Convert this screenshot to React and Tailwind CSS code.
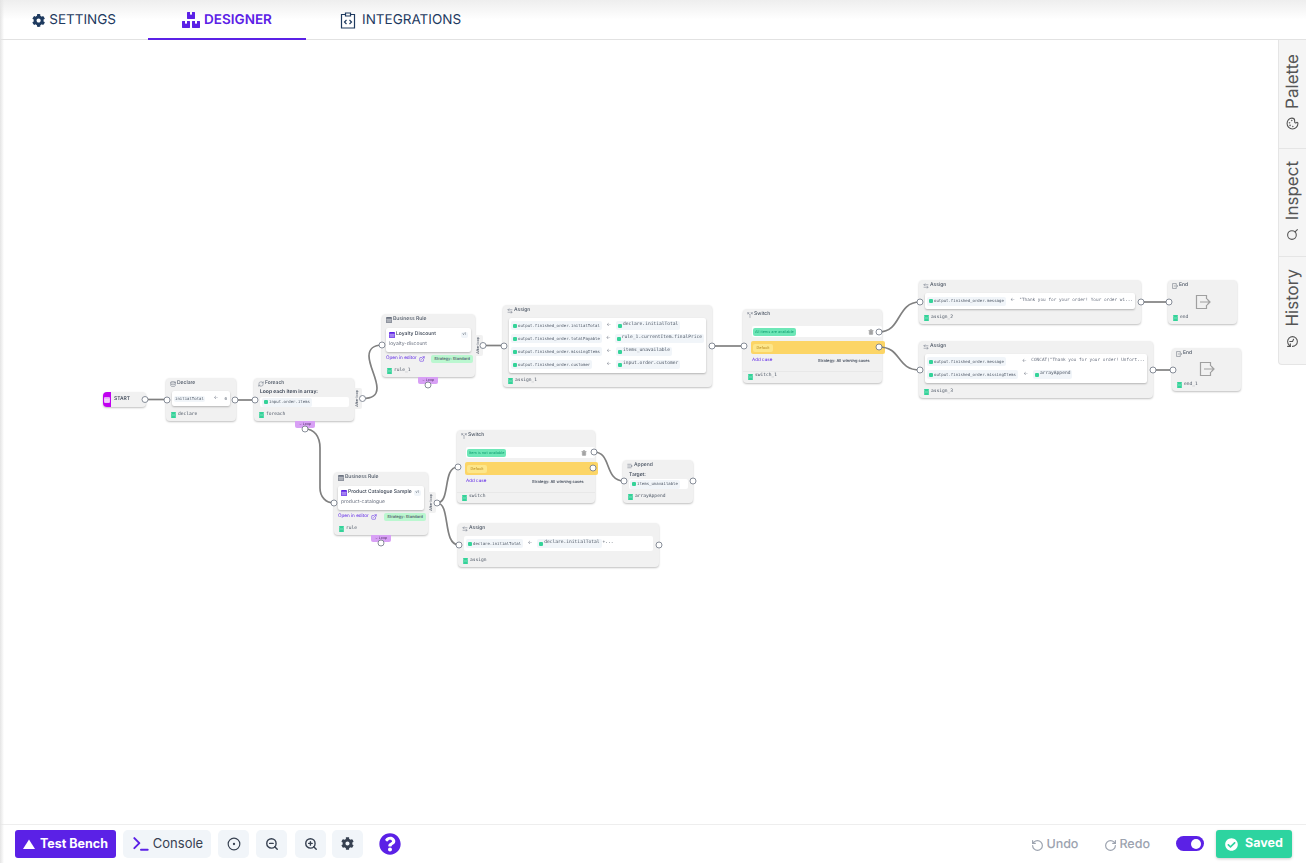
import {
  ArrowLeftRight, CircleDot, Database, ExternalLink, History, ListPlus, Palette, RefreshCw, RotateCcw, RotateCw, Search, Split, Terminal, Trash2, ZoomIn, ZoomOut, ChevronDown,
} from 'lucide-react'
import { FaBoxes, FaCheckCircle, FaCog, FaQuestionCircle } from 'react-icons/fa'

const mono = "font-['DejaVu_Sans_Mono',monospace]"

function IntegrationsIcon() {
  return (
    <svg width="16" height="17" viewBox="0 0 16 17" fill="none" stroke="currentColor" strokeWidth="1.2">
      <path d="M5 2.5H1.5v13.5h13V2.5H11" />
      <path d="M5.5 1h5v3h-5z" />
      <path d="M6.5 8l-2 2 2 2M9.5 8l2 2-2 2" />
    </svg>
  )
}

function EndIcon({ size }) {
  return (
    <svg width={size} height={size} viewBox="0 0 16 16" fill="none" stroke="currentColor" strokeWidth="1.2">
      <path d="M11.5 5V1.5h-10v13h10V11" />
      <path d="M5 8h10M12 5l3 3-3 3" />
    </svg>
  )
}

// small filled table glyph, used in the rule cards and the start node
function TableIcon({ className }) {
  return (
    <svg width="6" height="6" viewBox="0 0 6 6" className={className}>
      <rect width="6" height="6" rx="1" fill="currentColor" />
      <path d="M0 2.2h6M0 4h6M2 2.2V6M4 2.2V6" stroke="#fff" strokeWidth="0.5" />
    </svg>
  )
}

function DbIcon() {
  return (
    <svg width="5" height="6" viewBox="0 0 5 6" className="text-[#34d399] shrink-0" fill="currentColor">
      <rect width="5" height="1.9" y="0" rx="0.8" />
      <rect width="5" height="1.6" y="2.2" />
      <rect width="5" height="1.9" y="4.1" rx="0.8" />
    </svg>
  )
}

function TabButton({ icon, label, active, className }) {
  return (
    <div className={`flex items-center justify-center gap-1 h-[40px] pt-[2px] text-[13.5px] border-b-2 ${active ? 'border-[#5b21e6] text-[#5b21e6] font-semibold' : 'border-transparent text-[#1e3a5f]'} ${className}`}>
      {icon}
      <span>{label}</span>
    </div>
  )
}

function SideTab({ icon, label, className }) {
  return (
    <div className={`flex flex-col-reverse items-center justify-start gap-2 border-b border-[#e5e5e5] text-[#555555] ${className}`}>
      <span className="-rotate-90">{icon}</span>
      <span className="[writing-mode:vertical-rl] rotate-180 text-[17px] leading-[28px]">{label}</span>
    </div>
  )
}

function Pill({ children, tiny }) {
  return (
    <span className={`flex items-center gap-[1px] bg-[#f1f5f9] rounded-[2px] px-[2px] h-[9px] text-[#4b5563] whitespace-nowrap ${mono} ${tiny ? 'text-[4px]' : 'text-[4.6px]'}`}>
      <span className="w-[4px] h-[4px] rounded-[1px] bg-[#34d399]" />
      {children}
    </span>
  )
}

function Footer({ name, className }) {
  return (
    <div className={`flex items-center gap-[2px] -ml-[1px] text-[#4b5563] text-[4.6px] h-[6px] ${mono} ${className}`}>
      <DbIcon />
      {name}
    </div>
  )
}

function Node({ className, icon, title, children }) {
  return (
    <div className={`absolute bg-[#f1f1f1] rounded-[4px] shadow-[0_1px_2px_rgba(0,0,0,0.25)] px-[6px] pt-[2px] ${className}`}>
      <div className="flex items-center gap-[1px] h-[7px] -ml-[2px] text-[5px] font-medium text-[#4b5563]">
        {icon}
        {title}
      </div>
      {children}
    </div>
  )
}

function AssignRow({ left, right, leftClass, plain }) {
  return (
    <div className="flex items-center h-[13px]">
      <div className={`flex items-center ${leftClass}`}>
        <Pill tiny>{left}</Pill>
      </div>
      <span className="w-[14px] text-center text-[5px] text-[#6b7280]">←</span>
      {plain ? (
        <span className={`text-[4.4px] text-[#6b7280] whitespace-nowrap ${mono}`}>{right}</span>
      ) : (
        <Pill>{right}</Pill>
      )}
    </div>
  )
}

function RuleBody({ title, slug, editor, footer }) {
  return (
    <>
      <div className="mt-[5px] -mx-[2px] h-[24px] bg-white rounded-[2px] shadow-[0_1px_2px_rgba(0,0,0,0.25)] px-[3px] py-[3px]">
        <div className="flex items-center justify-between">
          <div className="flex items-center gap-[1px] text-[5px] font-medium text-[#374151] whitespace-nowrap">
            <TableIcon className="text-[#5b21e6]" />
            {title}
          </div>
          <span className="bg-[#f1f5f9] rounded-[2px] px-[2px] h-[6px] flex items-center text-[3.5px] text-[#4b5563]">v1</span>
        </div>
        <div className="text-[5px] text-[#6b7280] mt-[2px]">{slug}</div>
      </div>
      <div className="flex items-center justify-between mt-[3px] -ml-[2px] -mr-[4px]">
        <span className="flex items-center gap-[2px] text-[4.6px] text-[#5b21e6] whitespace-nowrap">
          {editor}
          <ExternalLink size={6} />
        </span>
        <span className="bg-[#bbf7d0] rounded-[2px] px-[3px] h-[8px] flex items-center text-[4px] text-[#4b5563] whitespace-nowrap font-medium">Strategy: Standard</span>
      </div>
      <Footer name={footer} className="mt-[5px]" />
    </>
  )
}

function SwitchBody({ caseLabel, footer }) {
  return (
    <>
      <div className="mt-[8px] -mr-[6px] ml-[3px] h-[11px] bg-white rounded-[2px] flex items-center justify-between pl-[1px] pr-[8px]">
        <span className="bg-[#6ee7b7] rounded-[2px] h-[8px] px-[2px] flex items-center text-[3.8px] text-[#0f9d70] whitespace-nowrap">{caseLabel}</span>
        <Trash2 size={6} className="text-[#a3a3a3]" fill="currentColor" />
      </div>
      <div className="mt-[4px] -mr-[9px] ml-[2px] h-[13px] bg-[#fcd566] rounded-[2px] flex items-center pl-[2px]">
        <span className="bg-[#fde68a] rounded-[2px] h-[8px] w-[20px] justify-center flex items-center text-[3.8px] text-[#b98a1a]">Default</span>
      </div>
      <div className="mt-[4px] ml-[3px] flex items-center gap-[46px]">
        <span className="w-[20px] text-[4.6px] text-[#5b21e6] whitespace-nowrap">Add case</span>
        <span className="text-[4px] text-[#374151] font-medium whitespace-nowrap">Strategy: All winning cases</span>
      </div>
      <div className="mt-[6px] -mx-[6px] px-[6px] pt-[2px] border-t border-[#e8e8e8]">
        <Footer name={footer} />
      </div>
    </>
  )
}

function LoopPill({ className }) {
  return (
    <div className={`absolute w-[20px] h-[7px] bg-[#d8a0f5] rounded-b-[2px] flex items-center justify-center gap-[1px] text-[3.5px] text-[#4b2a63] ${className}`}>
      <ChevronDown size={3} />
      Loop
    </div>
  )
}

function AfterLoop({ className }) {
  return (
    <div className={`absolute w-[8px] h-[21px] bg-[#f1f1f1] rounded-r-[2px] flex items-center justify-center ${className}`}>
      <span className="[writing-mode:vertical-rl] rotate-180 text-[3.6px] leading-none whitespace-nowrap text-[#374151]">After loop</span>
    </div>
  )
}

const wires = [
  'M145 399.5H167',
  'M235 400H255',
  'M362.5 398.5C372 398.5 377 396 377 388C377 378 369 366 369 356C369 349 374 345 382 345',
  'M305 429C314 429 320 436 320 448V488C320 497 326 503 334 503',
  'M483 345.5H504',
  'M712 346H744',
  'M879 332C902 332 896 302 920 302',
  'M879 347C902 347 896 370 920 370',
  'M1141 302H1169',
  'M1153 370H1173',
  'M437 503C451 503 442 467 458 467',
  'M437 503C451 503 442 545 459 545',
  'M594 452C612 452 604 481 624 481',
]

const handles = [
  [145, 399.5], [167, 400], [235, 400], [255, 400], [362.5, 398.5], [305, 429],
  [382, 345], [483, 345.5], [428, 385], [504, 346], [712, 346], [744, 346],
  [879, 332], [879, 347], [920, 302], [920, 370], [1141, 302], [1169, 302], [1153, 370], [1173, 370],
  [334, 503], [437, 503], [381, 543], [458, 467], [459, 545], [594, 452], [593, 468],
  [624, 481], [693, 481], [659, 545],
]

function Wires() {
  return (
    <svg className="absolute left-0 -top-[40px] w-full h-[863px] pointer-events-none z-10" fill="none">
      {wires.map((d) => (
        <path key={d} d={d} stroke="#808080" strokeWidth="1.7" />
      ))}
      {handles.map(([cx, cy]) => (
        <circle key={`${cx}-${cy}`} cx={cx} cy={cy} r="3" fill="#fff" stroke="#6b7280" strokeWidth="0.8" />
      ))}
    </svg>
  )
}

function ToolButton({ children, className }) {
  return (
    <button className={`h-[28px] rounded-[5px] bg-[#f1f5f9] text-[#374151] flex items-center justify-center ${className}`}>
      {children}
    </button>
  )
}

export default function App() {
  const gray = 'text-[#6b7280]'
  const cardShadow = 'bg-white rounded-[2px] shadow-[0_1px_2px_rgba(0,0,0,0.25)]'
  return (
    <div className="w-[1306px] h-[863px] overflow-hidden bg-white flex flex-col font-['Inter',sans-serif] relative [text-rendering:geometricPrecision]">
      <div className="absolute left-0 top-0 bottom-0 w-[4px] bg-gradient-to-r from-[#e4e4e4] to-transparent z-20" />

      {/* Tabs */}
      <header className="h-[40px] shrink-0 flex border-b border-[#e2e2e2] bg-gradient-to-b from-[#eeeeee] via-white to-white to-40%">
        <TabButton icon={<FaCog size={15} />} label="SETTINGS" className="w-[116px] pl-[32px] !justify-start" />
        <TabButton icon={<FaBoxes size={18} />} label="DESIGNER" active className="w-[158px] ml-[32px]" />
        <TabButton icon={<IntegrationsIcon />} label="INTEGRATIONS" className="w-[123px] ml-[34px] gap-[6px] !justify-start" />
      </header>

      {/* Canvas */}
      <main className="relative flex-1 bg-white">
        <div className="absolute right-0 top-0 w-[28px] h-[325px] bg-[#f5f5f5] rounded-bl-[4px] border-l border-b border-[#e5e5e5] flex flex-col">
          <SideTab label="Palette" icon={<Palette size={13} />} className="h-[109px] pb-[18px]" />
          <SideTab label="Inspect" icon={<Search size={13} />} className="h-[108px] pb-[15px]" />
          <SideTab label="History" icon={<History size={13} />} className="h-[107px] pb-[16px] border-b-0" />
        </div>

        {/* diagram, top values are relative to the 40px header */}
        <div className="absolute inset-0 blur-[0.3px]">
          <div className="absolute left-[103px] top-[352px] w-[43px] h-[15px] bg-[#f1f1f1] rounded-[4px] shadow-[0_1px_2px_rgba(0,0,0,0.25)] flex items-center overflow-hidden">
            <div className="w-[8px] h-full bg-[#c000f0] flex items-center justify-center">
              <TableIcon className="text-[#e9a5fb]" />
            </div>
            <span className="ml-[3px] text-[5px] font-medium text-[#374151]">START</span>
          </div>

          <Node className="left-[166px] top-[338px] w-[70px] h-[43px]" icon={<Database size={6} className={gray} />} title="Declare">
            <div className={`mt-[4px] h-[15px] flex items-center pl-[2px] pr-[3px] ${cardShadow}`}>
              <span className={`bg-[#f1f5f9] rounded-[2px] px-[1px] text-[4px] text-[#4b5563] ${mono}`}>initialTotal</span>
              <span className={`ml-auto mr-[6px] text-[5px] ${gray}`}>←</span>
              <span className={`text-[4px] text-[#4b5563] ${mono}`}>0</span>
            </div>
            <Footer name="declare" className="mt-[6px]" />
          </Node>

          <Node className="left-[254px] top-[338px] w-[100px] h-[43px]" icon={<RefreshCw size={6} className={gray} />} title="Foreach">
            <div className="mt-[1px] text-[5px] font-semibold text-[#374151] leading-[8px]">Loop each item in array:</div>
            <div className="mt-[1px] -mr-[1px] h-[10px] bg-white rounded-[2px] flex items-center px-[2px]">
              <Pill tiny>input.order.items</Pill>
            </div>
            <Footer name="foreach" className="mt-[5px]" />
          </Node>
          <AfterLoop className="left-[354px] top-[348px]" />
          <LoopPill className="left-[295px] top-[381px]" />

          <Node className="left-[382px] top-[274px] w-[93px] h-[63px]" icon={<TableIcon className={gray} />} title="Business Rule">
            <RuleBody title="Loyalty Discount" slug="loyalty-discount" editor="Open in editor" footer="rule_1" />
          </Node>
          <AfterLoop className="left-[475px] top-[295px]" />
          <LoopPill className="left-[418px] top-[337px]" />

          <Node className="left-[503px] top-[265px] w-[209px] h-[82px]" icon={<ArrowLeftRight size={6} className={gray} />} title="Assign">
            <div className={`mt-[4px] h-[55px] px-[2px] pt-[1px] ${cardShadow}`}>
              <AssignRow left="output.finished_order.initialTotal" right="declare.initialTotal" leftClass="w-[91px]" />
              <AssignRow left="output.finished_order.totalPayable" right="rule_1.currentItem.finalPrice" leftClass="w-[91px]" />
              <AssignRow left="output.finished_order.missingItems" right="items_unavailable" leftClass="w-[91px]" />
              <AssignRow left="output.finished_order.customer" right="input.order.customer" leftClass="w-[91px]" />
            </div>
            <Footer name="assign_1" className="mt-[5px]" />
          </Node>

          <Node className="left-[743px] top-[269px] w-[139px] h-[74px]" icon={<Split size={6} className={gray} />} title="Switch">
            <SwitchBody caseLabel="All items are available" footer="switch_1" />
          </Node>

          <Node className="left-[919px] top-[240px] w-[222px] h-[44px]" icon={<ArrowLeftRight size={6} className={gray} />} title="Assign">
            <div className={`mt-[4px] h-[16px] px-[2px] flex items-center ${cardShadow}`}>
              <Pill tiny>output.finished_order.message</Pill>
              <span className={`w-[14px] text-center text-[5px] ${gray}`}>←</span>
              <span className={`text-[4.4px] text-[#6b7280] whitespace-nowrap ${mono}`}>"Thank you for your order! Your order wi...</span>
            </div>
            <Footer name="assign_2" className="mt-[6px]" />
          </Node>

          <Node className="left-[1168px] top-[240px] w-[69px] h-[44px]" icon={<EndIcon size={6} />} title="End">
            <div className="flex justify-center text-[#a0a0a0] h-[15px] items-center mt-[5px]">
              <EndIcon size={16} />
            </div>
            <Footer name="end" className="mt-[6px]" />
          </Node>

          <Node className="left-[919px] top-[301px] w-[234px] h-[57px]" icon={<ArrowLeftRight size={6} className={gray} />} title="Assign">
            <div className={`mt-[4px] h-[29px] px-[2px] pt-[1px] ${cardShadow}`}>
              <AssignRow left="output.finished_order.message" right={'CONCAT("Thank you for your order! Unfort...'} leftClass="w-[92px]" plain />
              <AssignRow left="output.finished_order.missingItems" right="arrayAppend" leftClass="w-[92px]" />
            </div>
            <Footer name="assign_3" className="mt-[6px]" />
          </Node>

          <Node className="left-[1172px] top-[308px] w-[69px] h-[43px]" icon={<EndIcon size={6} />} title="End">
            <div className="flex justify-center text-[#a0a0a0] h-[15px] items-center mt-[4px]">
              <EndIcon size={16} />
            </div>
            <Footer name="end_1" className="mt-[6px]" />
          </Node>

          <Node className="left-[334px] top-[432px] w-[94px] h-[63px]" icon={<TableIcon className={gray} />} title="Business Rule">
            <RuleBody title="Product Catalogue Sample" slug="product-catalogue" editor="Open in editor" footer="rule" />
          </Node>
          <AfterLoop className="left-[428px] top-[452px]" />
          <LoopPill className="left-[371px] top-[495px]" />

          <Node className="left-[457px] top-[390px] w-[138px] h-[73px]" icon={<Split size={6} className={gray} />} title="Switch">
            <SwitchBody caseLabel="Item is not available" footer="switch" />
          </Node>

          <Node className="left-[623px] top-[420px] w-[70px] h-[43px]" icon={<ListPlus size={6} className={gray} />} title="Append">
            <div className="text-[5px] font-medium text-[#374151] leading-[8px] mt-[2px]">Target:</div>
            <div className="h-[10px] bg-white rounded-[2px] flex items-center px-[1px] -mr-[1px]">
              <Pill tiny>items_unavailable</Pill>
            </div>
            <Footer name="arrayAppend" className="mt-[5px]" />
          </Node>

          <Node className="left-[458px] top-[483px] w-[201px] h-[44px]" icon={<ArrowLeftRight size={6} className={gray} />} title="Assign">
            <div className="mt-[4px] h-[15px] bg-white rounded-[2px] px-[2px] flex items-center">
              <Pill tiny>declare.initialTotal</Pill>
              <span className={`w-[14px] text-center text-[5px] ${gray}`}>←</span>
              <Pill>declare.initialTotal</Pill>
              <span className={`ml-[1px] text-[4.6px] text-[#4b5563] ${mono}`}>+...</span>
            </div>
            <Footer name="assign" className="mt-[7px]" />
          </Node>

          <Wires />
        </div>
      </main>

      {/* Toolbar */}
      <footer className="h-[39px] shrink-0 bg-white border-t border-[#eeeeee] shadow-[0_-1px_3px_rgba(0,0,0,0.06)] flex items-center pl-[15px] pr-[14px] pb-[1px]">
        <button className="w-[101px] h-[28px] pt-[1px] rounded-[3px] bg-[#5b21e6] text-white text-[12.5px] font-bold flex items-center justify-center gap-[5px]">
          <svg width="12" height="10" viewBox="0 0 12 10" fill="currentColor"><path d="M6 0.5L12 10H0z" /></svg>
          Test Bench
        </button>
        <ToolButton className="w-[88px] ml-[7px] gap-[2px] text-[13px] text-[#4b5563]">
          <Terminal size={20} className="text-[#5b21e6]" strokeWidth={2.4} />
          Console
        </ToolButton>
        <ToolButton className="w-[31px] ml-[7px]"><CircleDot size={14} /></ToolButton>
        <ToolButton className="w-[31px] ml-[7px]"><ZoomOut size={14} strokeWidth={2.4} /></ToolButton>
        <ToolButton className="w-[31px] ml-[8px]"><ZoomIn size={14} strokeWidth={2.4} /></ToolButton>
        <ToolButton className="w-[31px] ml-[6px]"><FaCog size={13} /></ToolButton>
        <FaQuestionCircle size={22} className="ml-[16px] text-[#5b21e6]" />

        <div className="ml-auto flex items-center text-[12.5px] font-medium text-[#9ca3af]">
          <span className="flex items-center gap-[2px] mt-[4px]"><RotateCcw size={13} strokeWidth={2.2} />Undo</span>
          <span className="flex items-center gap-[2px] ml-[26px] mt-[4px]"><RotateCw size={13} strokeWidth={2.2} />Redo</span>
          <div className="ml-[26px] w-[28px] h-[15px] rounded-full bg-[#5b21e6] flex items-center justify-end pr-[3px]">
            <div className="w-[10px] h-[10px] rounded-full bg-white" />
          </div>
          <div className="ml-[12px] mt-[1px] pt-[1px] w-[76px] h-[28px] rounded-[3px] bg-[#2dd4a0] text-white font-bold flex items-center justify-center gap-[7px] shadow-[0_1px_3px_rgba(0,0,0,0.2)]">
            <FaCheckCircle size={13} />
            Saved
          </div>
        </div>
      </footer>
    </div>
  )
}
